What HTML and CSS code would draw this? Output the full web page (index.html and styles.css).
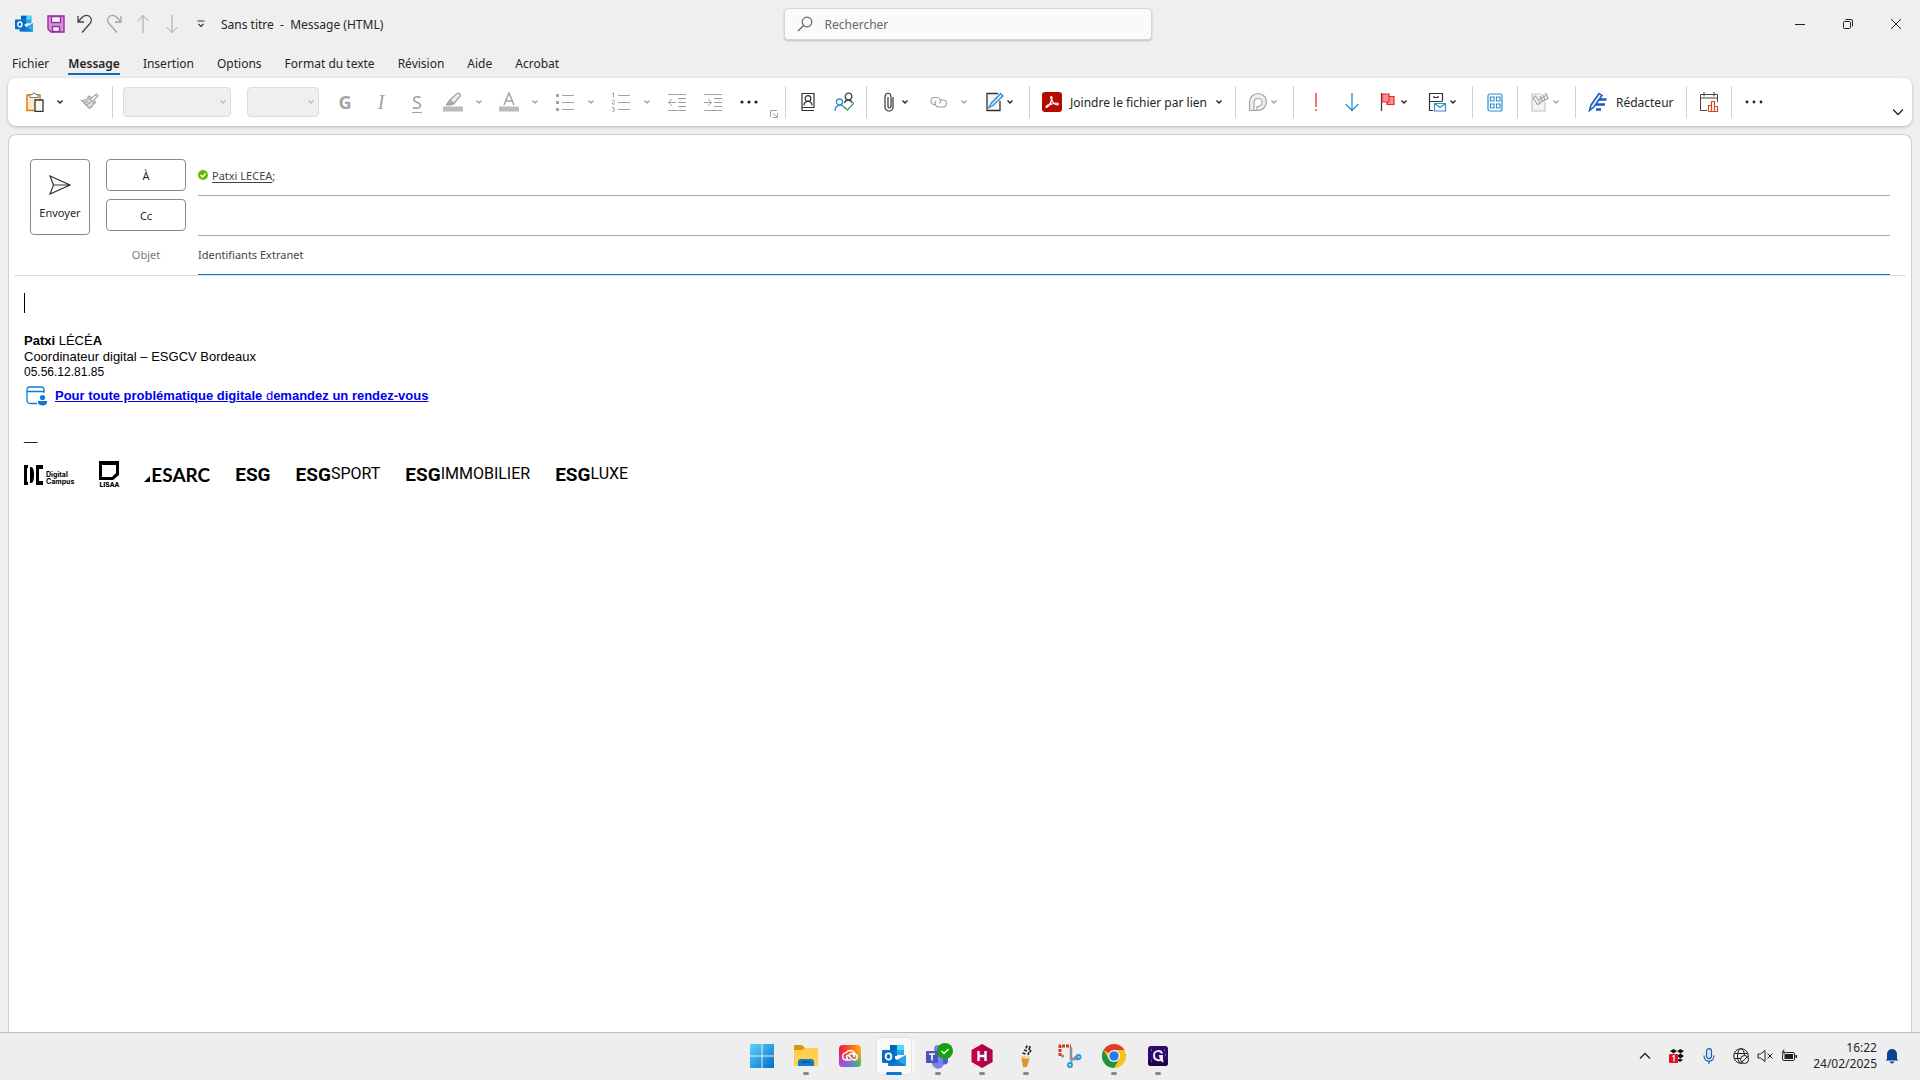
FILE: index.html
```html
<!DOCTYPE html>
<html lang="fr">

<head>
	<meta charset="UTF-8">
	<meta name="viewport" content="width=device-width, initial-scale=1.0">
	<title>Sans titre - Message (HTML)</title>
	<link rel="stylesheet" href="styles.css">
</head>

<body>
	<svg class="sprite" aria-hidden="true">
		<symbol id="chevron" viewBox="0 0 8 8"><path d="M1.5 2.5L4 5l2.500-2.500" fill="none" stroke="currentColor" stroke-width="1.400"/></symbol>
		<symbol id="outlook" viewBox="0 0 24 24">
			<path d="M8 1h14v10H8z" fill="#28a8ea"/>
			<path d="M15 1h7v5h-7z" fill="#50d9ff"/>
			<path d="M8 1h7v5H8z" fill="#0364b8"/>
			<path d="M8 6h7v6H8z" fill="#0078d4"/>
			<path d="M6 11l9 5 9-5v11H6z" fill="#1490df"/>
			<path d="M24 11v11H10z" fill="#28a8ea"/>
			<path d="M6 10l18 12H7z" fill="#0f5fae" opacity=".6"/>
			<rect y="6" width="13" height="13" rx="1" fill="#0a6cc8"/>
			<ellipse cx="6.500" cy="12.500" rx="2.800" ry="3.200" fill="none" stroke="#fff" stroke-width="1.800"/>
		</symbol>
	</svg>

	<header class="titlebar">
		<div class="quick-access">
			<svg class="app-icon" width="18" height="18"><use href="#outlook"/></svg>
			<button aria-label="Enregistrer"><svg width="18" height="18" viewBox="0 0 18 18" fill="#d594dc" stroke="#9331a0" stroke-width="1.400"><path d="M1 1h16v16H4l-3-3z"/><path d="M4.500 1.500h9v6h-9zM5.500 11.500h7v5h-7z" fill="#fafafa"/></svg></button>
			<button aria-label="Annuler"><svg width="18" height="20" viewBox="0 0 18 20" fill="none" stroke="#444" stroke-width="1.300"><path d="M2 2v6h6M2 8l4-4.500c3-3 7-2.500 8.500 0 1.500 2.300.700 4.500-.500 6L6 18.500"/></svg></button>
			<button class="off" aria-label="Rétablir"><svg width="18" height="20" viewBox="0 0 18 20" fill="none" stroke="currentColor" stroke-width="1.300"><path d="M16 2v6h-6M16 8l-4-4.500c-3-3-7-2.500-8.500 0-1.500 2.300-.700 4.500.500 6l8 9"/></svg></button>
			<button class="off" aria-label="Élément précédent"><svg width="14" height="20" viewBox="0 0 14 20" fill="none" stroke="currentColor"><path d="M7 19V1.500M1.500 7L7 1.500 12.500 7"/></svg></button>
			<button class="off" aria-label="Élément suivant"><svg width="14" height="20" viewBox="0 0 14 20" fill="none" stroke="currentColor"><path d="M7 1v17.500M1.500 13L7 18.500l5.500-5.500"/></svg></button>
			<button aria-label="Personnaliser"><svg width="8" height="8" viewBox="0 0 8 8" fill="none" stroke="#333" stroke-width="1.200"><path d="M.500 1h7M1.500 4L4 6.500 6.500 4"/></svg></button>
			<h1>Sans titre&nbsp; -&nbsp; Message (HTML)</h1>
		</div>
		<label class="search">
			<svg width="16" height="16" viewBox="0 0 16 16" fill="none" stroke="#666" stroke-width="1.200"><circle cx="10" cy="6" r="4.800"/><path d="M6.500 9.500L1 15"/></svg>
			<input type="search" placeholder="Rechercher" aria-label="Rechercher">
		</label>
		<div class="window-buttons">
			<button aria-label="Réduire"><svg width="12" height="12" viewBox="0 0 12 12" stroke="#222"><path d="M1 6.500h10"/></svg></button>
			<button aria-label="Restaurer"><svg width="12" height="12" viewBox="0 0 12 12" fill="none" stroke="#222"><rect x="1.500" y="3.500" width="7" height="7" rx="1"/><path d="M3.500 1.500H9A1.500 1.500 0 0 1 10.500 3v5.500"/></svg></button>
			<button aria-label="Fermer"><svg width="12" height="12" viewBox="0 0 12 12" stroke="#222"><path d="M1 1l10 10M11 1L1 11"/></svg></button>
		</div>
	</header>

	<nav class="tabs">
		<a href="#">Fichier</a>
		<a href="#" class="active">Message</a>
		<a href="#">Insertion</a>
		<a href="#">Options</a>
		<a href="#">Format du texte</a>
		<a href="#">Révision</a>
		<a href="#">Aide</a>
		<a href="#">Acrobat</a>
	</nav>

	<section class="ribbon">
		<div class="group">
			<button class="tool" aria-label="Coller"><svg width="20" height="20" viewBox="0 0 20 20" fill="none"><path d="M3 4h12v15H3z" fill="#fde8c8"/><path d="M6 3H3v15.500h7M13 3h3v4" stroke="#e07a10" stroke-width="1.500"/><path d="M6 5.500v-3h2.500a1.500 1.500 0 0 1 3 0H14v3z" fill="#fff" stroke="#777"/><path d="M11 8h8v11.500h-8z" fill="#fafafa" stroke="#333" stroke-width="1.300"/></svg></button>
			<button class="drop" aria-label="Options de collage"><svg width="8" height="8"><use href="#chevron"/></svg></button>
			<button class="tool off" aria-label="Reproduire la mise en forme"><svg width="20" height="20" viewBox="0 0 20 20" fill="#ddd" stroke="currentColor" stroke-width="1.200"><path d="M1.500 8.500c2.500.500 5-.500 7-3l5.500 5.500c-1 2.500-2.500 4.500-4.500 5.500z"/><path d="M8 5l6.500 6.500 1.200-1.200-2-2 4.300-4.500-1.700-1.700-4.600 4.100-2.300-2.200z" fill="#fff"/><path d="M4 11l4-2M6 13l5-3" fill="none"/></svg></button>
		</div>
		<div class="group fonts">
			<span class="combo font-name"><select aria-label="Police" disabled></select><svg width="8" height="8"><use href="#chevron"/></svg></span>
			<span class="combo"><select aria-label="Taille" disabled></select><svg width="8" height="8"><use href="#chevron"/></svg></span>
			<button class="tool off letter bold">G</button>
			<button class="tool off letter italic">I</button>
			<button class="tool off letter underline">S</button>
			<button class="tool off" aria-label="Surlignage"><svg width="20" height="20" viewBox="0 0 20 20" fill="none" stroke="currentColor"><path d="M0 17h20" stroke="#bbb" stroke-width="5"/><path d="M7 8l7-6.500c2-1 4 1 3 2.500L11 11.500z" fill="#eee" stroke-width="1.300"/><path d="M6.500 8l4.500 4-3 1H3z" fill="#aaa"/></svg></button>
			<button class="drop off" aria-label="Couleurs de surlignage"><svg width="8" height="8"><use href="#chevron"/></svg></button>
			<button class="tool off" aria-label="Couleur de police"><svg width="20" height="20" viewBox="0 0 20 20" fill="none" stroke="currentColor"><path d="M0 17h20" stroke="#bbb" stroke-width="5"/><path d="M5 13l5-12 5 12M6.500 9h7" stroke-width="1.500"/></svg></button>
			<button class="drop off" aria-label="Couleurs de police"><svg width="8" height="8"><use href="#chevron"/></svg></button>
			<button class="tool off" aria-label="Puces"><svg width="20" height="20" viewBox="0 0 20 20" stroke="currentColor"><path d="M7 3.500h12M7 10.500h12M7 17.500h12"/><path d="M1 3.500h3M1 10.500h3M1 17.500h3" stroke-width="3"/></svg></button>
			<button class="drop off" aria-label="Styles de puces"><svg width="8" height="8"><use href="#chevron"/></svg></button>
			<button class="tool off" aria-label="Numérotation"><svg width="20" height="20" viewBox="0 0 20 20" stroke="currentColor" fill="none"><path d="M7 3.500h12M7 10.500h12M7 17.500h12"/><path d="M1 2l1.500-1v4.500M1 8.500c1-1 2.500-.500 2.500.500S1.500 10.500 1 12h3M1 15.500c2.500-1 3 1.500 1 1.500 2.500 0 2 3-1 2"/></svg></button>
			<button class="drop off" aria-label="Formats de numéros"><svg width="8" height="8"><use href="#chevron"/></svg></button>
			<button class="tool off" aria-label="Diminuer le retrait"><svg width="20" height="20" viewBox="0 0 20 20" stroke="currentColor" fill="none"><path d="M1 2.500h18M11 6.500h8M11 10.500h8M11 14.500h8M1 18.500h18M9 10.500H1.500M5 7l-3.500 3.500L5 14"/></svg></button>
			<button class="tool off" aria-label="Augmenter le retrait"><svg width="20" height="20" viewBox="0 0 20 20" stroke="currentColor" fill="none"><path d="M1 2.500h18M11 6.500h8M11 10.500h8M11 14.500h8M1 18.500h18M1 10.500h7.500M5 7l3.500 3.500L5 14"/></svg></button>
			<button class="tool" aria-label="Plus de mise en forme"><svg width="20" height="20" viewBox="0 0 20 20" fill="#222"><circle cx="3" cy="10" r="1.600"/><circle cx="10" cy="10" r="1.600"/><circle cx="17" cy="10" r="1.600"/></svg></button>
			<button class="launcher off" aria-label="Police et paragraphe"><svg width="8" height="8" viewBox="0 0 8 8" fill="none" stroke="currentColor"><path d="M.500 7V.500H7M3 3l4 4M7.500 3v4.500H3"/></svg></button>
		</div>
		<div class="group">
			<button class="tool" aria-label="Carnet d'adresses"><svg width="20" height="20" viewBox="0 0 20 20" fill="none" stroke="#333" stroke-width="1.200"><path d="M16 15.500V1.500H4v17h12M4 15.500h12.500"/><circle cx="10" cy="6.500" r="2.800"/><path d="M6 13.500c0-5.500 8-5.500 8 0"/></svg></button>
			<button class="tool" aria-label="Vérifier les noms"><svg width="20" height="20" viewBox="0 0 20 20" fill="none" stroke-width="1.300"><g stroke="#2b8fd0"><circle cx="5.500" cy="10" r="3"/><path d="M1 19c0-7 8-7.500 9.500-2.500"/></g><g stroke="#444"><circle cx="14.500" cy="4.500" r="3.300"/><path d="M10.500 11c1-4 6-4 8 0"/></g><path d="M10.500 15l3 3 6.500-7" stroke="#3aa655"/></svg></button>
		</div>
		<div class="group">
			<button class="menu" aria-label="Joindre un fichier"><svg width="20" height="20" viewBox="0 0 20 20" fill="none" stroke="#333" stroke-width="1.200"><path d="M14 5v10a4 4 0 0 1-8 0V5c0-5 6-5 6 0v9.500a1.500 1.500 0 0 1-3 0V5"/></svg><svg width="8" height="8"><use href="#chevron"/></svg></button>
			<button class="tool off" aria-label="Lien"><svg width="20" height="20" viewBox="0 0 20 20" fill="none" stroke="currentColor" stroke-width="1.200"><path d="M8 12.500H5a4 4 0 0 1 0-7h4a3.500 3.500 0 0 1 2.500 6M12 8h3a3.500 3.500 0 0 1 0 7h-4.500a3.500 3.500 0 0 1-2.500-6"/></svg></button>
			<button class="drop off" aria-label="Options de lien"><svg width="8" height="8"><use href="#chevron"/></svg></button>
			<button class="menu" aria-label="Signature"><svg width="20" height="20" viewBox="0 0 20 20" fill="none"><path d="M16 9v9.500H3v-17h11" fill="#f7f7f7" stroke="#333" stroke-width="1.300"/><path d="M7 11.500L16.500 1.500l2.500 2.500L9 13.500l-4 2z" fill="#d6ebfa" stroke="#2b8fd0" stroke-width="1.300"/></svg><svg width="8" height="8"><use href="#chevron"/></svg></button>
		</div>
		<div class="group">
			<button class="text-tool"><svg width="20" height="20" viewBox="0 0 20 20"><rect width="20" height="20" rx="3" fill="#b30b00"/><path d="M4 15c1 1 3-1.500 4.500-4.500S10.500 5 9.500 4.500s-1 2 1 5 4.500 4 5.500 3-1-2-4.500-1S4.500 13 4 15z" fill="none" stroke="#fff" stroke-width="1.300"/></svg>Joindre le fichier par lien<svg width="8" height="8"><use href="#chevron"/></svg></button>
		</div>
		<div class="group">
			<button class="menu off" aria-label="Boucle"><svg width="20" height="20" viewBox="0 0 20 20" fill="#eee" stroke="currentColor" stroke-width="1.200"><path d="M1.500 18.500V10a8.500 8.500 0 1 1 8.500 8.500z"/><path d="M6 18v-7.500a4 4 0 1 1 4 4H9V18" fill="#fff"/></svg><svg width="8" height="8"><use href="#chevron"/></svg></button>
		</div>
		<div class="group">
			<button class="tool" aria-label="Importance haute"><svg width="20" height="20" viewBox="0 0 20 20" stroke="#f04848" stroke-width="1.500"><path d="M10 1v14M10 17v2"/></svg></button>
			<button class="tool" aria-label="Importance faible"><svg width="20" height="20" viewBox="0 0 20 20" fill="none" stroke="#2b8fd0" stroke-width="1.300"><path d="M10 1v17.500M3.500 12l6.500 6.500 6.500-6.500"/></svg></button>
			<button class="menu" aria-label="Assurer un suivi"><svg width="20" height="20" viewBox="0 0 20 20"><path d="M3.500 1v18" stroke="#333" stroke-width="1.200"/><path d="M4 2h7v2.500h5v8h-7V10H4z" fill="#ff8c90" stroke="#d92c2c" stroke-width="1.200"/><path d="M11 4.500V10H9" fill="none" stroke="#d92c2c"/></svg><svg width="8" height="8"><use href="#chevron"/></svg></button>
			<button class="menu" aria-label="Enregistrer dans"><svg width="20" height="20" viewBox="0 0 20 20" fill="none" stroke-width="1.200"><path d="M6 18.500H2.500v-17h13V9M2.500 9.500h13M7 4v1.500h4V4" stroke="#333"/><path d="M7.500 11.500h11v7.500h-11zl5.500 4 5.500-4" fill="#fff" stroke="#2b8fd0"/></svg><svg width="8" height="8"><use href="#chevron"/></svg></button>
		</div>
		<div class="group">
			<button class="tool" aria-label="Applications"><svg width="20" height="20" viewBox="0 0 20 20" fill="none" stroke="#2b8fd0" stroke-width="1.200"><rect x="3" y="2" width="14" height="17" rx="2"/><path d="M5.500 5H9v4H5.500zM11.500 5H15v4h-3.500zM5.500 12H9v4H5.500zM11.500 12H15v4h-3.500z"/></svg></button>
		</div>
		<div class="group">
			<button class="menu off" aria-label="Modèles"><svg width="20" height="20" viewBox="0 0 20 20" fill="#f3f3f3" stroke="#c4c4c4" stroke-width="1.200"><path d="M15 10v9H2V2h9"/><path d="M3 6l4.500 6.500 3-1.500L5.500 4z" stroke="currentColor"/><path d="M10 4l3 6M12.500 2.500l3 6M15 1l3 5M9.500 7.500l8-5M11 10l8-4" stroke="currentColor"/></svg><svg width="8" height="8"><use href="#chevron"/></svg></button>
		</div>
		<div class="group">
			<button class="text-tool"><svg width="20" height="20" viewBox="0 0 20 20" fill="none" stroke="#185abd"><path d="M9 7.500h9.500M6 12.500h11M8 17.500h5" stroke-width="2.600"/><path d="M3 13L11 1.500l3 2L6 15l-4.500 3.500z" fill="#d6e4f7" stroke-width="1.500"/></svg>Rédacteur</button>
		</div>
		<div class="group">
			<button class="tool" aria-label="Calendrier"><svg width="20" height="20" viewBox="0 0 20 20" fill="none"><path d="M8 18.500H1.500v-16h17V10M1.500 6h17M5 0v4.500M15 0v4.500" stroke="#444"/><path d="M9.500 19.500v-6h3v6h-3m3 0V9.500h3v10h-3m3 0v-5h3v5z" fill="#fff" stroke="#d9481c" stroke-width="1.200"/></svg></button>
		</div>
		<div class="group">
			<button class="tool" aria-label="Autres commandes"><svg width="20" height="20" viewBox="0 0 20 20" fill="#222"><circle cx="3" cy="10" r="1.400"/><circle cx="10" cy="10" r="1.400"/><circle cx="17" cy="10" r="1.400"/></svg></button>
		</div>
		<button class="collapse" aria-label="Options du ruban"><svg width="12" height="12" viewBox="0 0 12 12" fill="none" stroke="#222" stroke-width="1.300"><path d="M1 3.500l5 5 5-5"/></svg></button>
	</section>

	<main class="compose">
		<form class="headers">
			<button type="button" class="send"><svg width="22" height="20" viewBox="0 0 22 20" fill="none" stroke="#333" stroke-width="1.200"><path d="M1 1l20 9L1 19l3.500-9zM4.500 10H21"/></svg>Envoyer</button>
			<div class="fields">
				<button type="button" class="field-button">À</button>
				<div class="field">
					<svg width="10" height="10" viewBox="0 0 10 10"><circle cx="5" cy="5" r="5" fill="#6bb700"/><path d="M2.500 5l2 2 3.200-3.500" fill="none" stroke="#fff" stroke-width="1.400"/></svg>
					<span><a href="#">Patxi LECEA</a>;</span>
				</div>
				<button type="button" class="field-button">Cc</button>
				<div class="field"><input type="text" aria-label="Cc"></div>
				<label for="subject">Objet</label>
				<div class="field subject"><input type="text" id="subject" value="Identifiants Extranet"></div>
			</div>
		</form>

		<article class="message">
			<div class="caret"></div>
			<div class="signature">
				<p><b>Patxi</b> LÉCÉ<b>A</b></p>
				<p>Coordinateur digital – ESGCV Bordeaux</p>
				<p class="phone">05.56.12.81.85</p>
				<p class="booking">
					<svg width="21" height="20" viewBox="0 0 21 20" fill="none" stroke="#0f78d4"><path d="M11 17.500H4A3 3 0 0 1 1 14.500V3.500A2.500 2.500 0 0 1 3.500 1h12A2.500 2.500 0 0 1 18 3.500V7M1 5.500h17" stroke-width="1.300"/><circle cx="16.500" cy="11.500" r="2.600" fill="#0f78d4" stroke="none"/><path d="M12 15h9v1.500c0 4-9 4-9 0z" fill="#0f78d4" stroke="none"/></svg>
					<a href="#">Pour toute problématique digitale <span>d</span>emandez un rendez-vous</a>
				</p>
				<p class="dash">__</p>
			</div>
			<div class="logos">
				<div class="logo digital"><svg width="19" height="20" viewBox="0 0 19 20"><path d="M0 0h4v3H3v14h1v3H0zM6 2h1c2 0 3 3 3 8s-1 8-3 8H6zM12 0h7v4h-4v12h4v4h-7z"/></svg><span>Digital<br>Campus</span></div>
				<div class="logo lisaa"><svg width="20" height="20" viewBox="0 0 20 20"><path d="M0 0h20v14l-6 5H0zM3 4v12h10l4-4V4z" fill-rule="evenodd"/></svg><span>LISAA</span></div>
				<div class="logo esarc"><svg width="6" height="6" viewBox="0 0 6 6"><path d="M0 6l6-6v6z"/></svg>ESARC</div>
				<div class="logo">ESG</div>
				<div class="logo">ESG<span>SPORT</span></div>
				<div class="logo">ESG<span>IMMOBILIER</span></div>
				<div class="logo">ESG<span>LUXE</span></div>
			</div>
		</article>
	</main>

	<footer class="taskbar">
		<div class="apps">
			<button aria-label="Démarrer"><svg width="24" height="24" viewBox="0 0 24 24"><defs><linearGradient id="win" x2="1" y2="1"><stop stop-color="#5fd0ff"/><stop offset="1" stop-color="#0070c8"/></linearGradient></defs><path d="M0 0h11.500v11.500H0zM12.500 0H24v11.500H12.500zM0 12.500h11.500V24H0zM12.500 12.500H24V24H12.500z" fill="url(#win)"/></svg></button>
			<button class="running" aria-label="Explorateur"><svg width="24" height="24" viewBox="0 0 24 24"><path d="M0 2a1 1 0 0 1 1-1h7l3 3h12a1 1 0 0 1 1 1v5H0z" fill="#d9960a"/><path d="M0 6h8l3-2h12a1 1 0 0 1 1 1v17H0z" fill="#ffd04d"/><path d="M4 22v-4a3 3 0 0 1 3-3h10a3 3 0 0 1 3 3v4z" fill="#1278c8"/><path d="M8 18h8" stroke="#0a4f90" stroke-width="1.500"/></svg></button>
			<button aria-label="Creative Cloud"><svg width="22" height="22" viewBox="0 0 22 22"><defs><linearGradient id="cc" x2="1" y2="0"><stop stop-color="#f0144a"/><stop offset=".5" stop-color="#ff5a1a"/><stop offset="1" stop-color="#ffb01a"/></linearGradient><linearGradient id="cc2" x2="1" y2="0"><stop stop-color="#a94cff"/><stop offset=".5" stop-color="#4a7bff"/><stop offset="1" stop-color="#22c36b"/></linearGradient><linearGradient id="fade" x2="0" y2="1"><stop offset=".3" stop-color="#000"/><stop offset="1" stop-color="#fff"/></linearGradient><mask id="lower"><rect width="22" height="22" fill="url(#fade)"/></mask></defs><rect width="22" height="22" rx="4" fill="url(#cc)"/><rect width="22" height="22" rx="4" fill="url(#cc2)" mask="url(#lower)"/><path d="M12 15H7.500a3.600 3.600 0 0 1-.500-7.200A5 5 0 0 1 16 9c3.500 1.500 2.500 6-1 6-3 0-3.500-4.500-6-4.500a1.500 1.500 0 0 0 0 3M10 10c2-3 6-1 5 2" fill="none" stroke="#fff" stroke-width="1.500"/></svg></button>
			<button class="running current" aria-label="Outlook"><svg width="24" height="24"><use href="#outlook"/></svg></button>
			<button class="running" aria-label="Teams"><svg width="30" height="26" viewBox="0 0 30 26"><circle cx="15" cy="6" r="4" fill="#7b83eb"/><path d="M9 9h12v9a6 6 0 0 1-12 3z" fill="#7b83eb"/><path d="M20 10h5v8c0 3-3 4-5 3z" fill="#5059c9"/><rect x="3" y="8" width="12" height="12" rx="1" fill="#4b53bc"/><path d="M6 11h6M9 11v6.500" stroke="#fff" stroke-width="1.600"/><circle cx="22" cy="8" r="8" fill="#13a10e"/><path d="M18.500 8l2.500 2.500 4.500-4.500" fill="none" stroke="#fff" stroke-width="1.500"/></svg></button>
			<button class="running" aria-label="H"><svg width="22" height="24" viewBox="0 0 22 24"><path d="M11 0l10.500 6v12L11 24 .500 18V6z" fill="#c20045"/><path d="M11 0l10.500 6v12L11 24z" fill="#8e0e52" opacity=".5"/><path d="M7.500 7v10M14.500 7v10M8 12h6" stroke="#fff" stroke-width="2.400"/></svg></button>
			<button class="running" aria-label="Glace"><svg width="14" height="24" viewBox="0 0 14 24"><path d="M3 12C1 8 5 1 10 .500c4 0 3 7 .500 12z" fill="#eee"/><path d="M8 1.500l-1 3M11 2l-1 4M5 6l3 1M3.500 9l3 1M10 8l-1 3M12 6l-1 2" stroke="#222" stroke-width="1.700"/><path d="M2 12l9 1-3 10H4z" fill="#df962b"/><path d="M2 12l9 1-1 2-8-1z" fill="#f5d9a4"/></svg></button>
			<button aria-label="Capture"><svg width="24" height="24" viewBox="0 0 24 24" fill="none"><path d="M2 12V2h11" stroke="#d23b12" stroke-width="3" stroke-dasharray="3 1"/><path d="M13 3v12h8M3 12h3" stroke="#8b9298" stroke-width="2.500"/><path d="M14 15l-1 4M16 14l4-2" stroke="#8b9298" stroke-width="2"/><circle cx="12" cy="21" r="2" stroke="#1a9be0" stroke-width="1.800"/><circle cx="20.500" cy="13" r="2" stroke="#1a9be0" stroke-width="1.800"/></svg></button>
			<button class="running" aria-label="Chrome"><svg width="24" height="24" viewBox="0 0 24 24"><circle cx="12" cy="12" r="12" fill="#fbc116"/><path d="M12 12L1.600 6A12 12 0 0 1 22.400 6H12z" fill="#e33b2e"/><path d="M1.600 6A12 12 0 0 0 12 24l5.200-9L12 12 6.800 15z" fill="#229342"/><circle cx="12" cy="12" r="6" fill="#fff"/><circle cx="12" cy="12" r="4.800" fill="#2a7de9"/></svg></button>
			<button class="running" aria-label="Q"><svg width="20" height="20" viewBox="0 0 20 20"><rect width="20" height="20" rx="3" fill="#2f0a6b"/><path d="M0 14h20v3a3 3 0 0 1-3 3H3a3 3 0 0 1-3-3z" fill="#1c0447"/><path d="M14 7.500C13 4 6 4 6 9.500s6 5.500 8 3.500v-3h-3M12 11l3 5" fill="none" stroke="#f1e6ff" stroke-width="2"/><path d="M3 4h1M16 4h1M3 15h1M17 9h1" stroke="#c9a6ff"/></svg></button>
		</div>
		<div class="tray">
			<button aria-label="Icônes masquées"><svg width="12" height="12" viewBox="0 0 12 12" fill="none" stroke="#222" stroke-width="1.300"><path d="M1 8.500l5-5 5 5"/></svg></button>
			<button aria-label="Dropbox"><svg width="16" height="16" viewBox="0 0 16 16"><path d="M1 3l3.500-2L8 3 4.500 5.500zM8 3l3.500-2L15 3l-3.500 2.500zM8 8l3.500-2.500L15 8l-3.500 2.500zM8 12l3-1.500 3 1.500-3 2z" fill="#111"/><rect y="6" width="9" height="9" rx="1" fill="#e0102a"/><path d="M3.500 8.500l1.500-1v6" fill="none" stroke="#fff" stroke-width="1.200"/></svg></button>
			<button aria-label="Micro"><svg width="16" height="16" viewBox="0 0 16 16" fill="none" stroke="#1f5fb4" stroke-width="1.200"><rect x="5.500" y=".600" width="5" height="10" rx="2.500" fill="#d4e6fa"/><path d="M3 7.500c0 7.500 10 7.500 10 0M8 13v3"/></svg></button>
			<button class="status" aria-label="Réseau, son et batterie">
				<svg width="16" height="16" viewBox="0 0 16 16" fill="none" stroke="#222"><circle cx="8" cy="8" r="7.300"/><ellipse cx="8" cy="8" rx="3.500" ry="7.300"/><path d="M1.500 5.500h13M1.500 10.500h8"/><circle cx="11.500" cy="11.500" r="4" fill="#eee"/><path d="M9 14l5-5"/></svg>
				<svg width="16" height="16" viewBox="0 0 16 16" fill="none" stroke="#222"><path d="M1 6h2.500L8 2.500v11L3.500 10H1zM10.500 5.500l5 5M15.500 5.500l-5 5"/></svg>
				<svg width="16" height="16" viewBox="0 0 16 16"><rect x="1.500" y="4.500" width="12" height="8" rx="1.500" fill="none" stroke="#222"/><path d="M3.500 6h8.500v5H3.500zM14.500 7H16v3h-1.500z" fill="#222"/><path d="M3.500 0L0 5h2.500l-.500 3L5.500 3.500H3z" fill="#222" stroke="#eee" stroke-width=".500"/></svg>
			</button>
			<button class="clock"><time>16:22</time><time>24/02/2025</time></button>
			<button class="bell" aria-label="Notifications"><svg width="14" height="16" viewBox="0 0 14 16" fill="#0a4394"><path d="M2 11V6a5 5 0 0 1 10 0v5l1.500 1.500H.500zM4.500 13.500h5c-1 2.500-4 2.500-5 0z"/></svg></button>
		</div>
	</footer>
</body>

</html>
```
FILE: styles.css
```css
* {
	box-sizing: border-box;
}

body {
	margin: 0;
	min-height: 100vh;
	display: flex;
	flex-direction: column;
	background-color: #efefef;
	color: #262626;
	font-family: "Noto Sans", "Open Sans", sans-serif;
	font-size: 12px;
	overflow: hidden;
}

button {
	display: flex;
	align-items: center;
	justify-content: center;
	padding: 0;
	border: none;
	background: none;
	color: inherit;
	font: inherit;
	cursor: pointer;
}

input {
	width: 100%;
	padding: 0;
	border: none;
	outline: none;
	background: none;
	color: inherit;
	font: inherit;
}

a {
	color: inherit;
	text-decoration: none;
}

svg {
	display: block;
	flex-shrink: 0;
}

.sprite {
	position: absolute;
	width: 0;
	height: 0;
}

.off {
	color: #a3a3a3;
}

/* title bar */
.titlebar {
	display: grid;
	grid-template-columns: 1fr 368px 1fr;
	align-items: center;
	height: 48px;
	padding-left: 15px;
}

.quick-access {
	display: flex;
	align-items: center;
}

.quick-access button {
	width: 29px;
	height: 28px;
}

.app-icon {
	margin-right: 8px;
}

.quick-access h1 {
	margin: 0 0 0 6px;
	font-size: 12px;
	font-weight: 400;
}

.search {
	display: flex;
	align-items: center;
	gap: 12px;
	height: 32px;
	padding: 0 12px;
	border: 1px solid #d6d6d6;
	border-radius: 4px;
	background-color: #fafafa;
	box-shadow: 0 1px 2px rgba(0, 0, 0, 0.2);
}

.search input::placeholder {
	color: #666;
	opacity: 1;
}

.window-buttons {
	display: flex;
	justify-content: flex-end;
	height: 100%;
}

.window-buttons button {
	width: 48px;
}

/* tabs */
.tabs {
	display: flex;
	gap: 23px;
	height: 30px;
	padding: 4px 12px 0;
}

.tabs a {
	height: 23px;
	line-height: 23px;
}

.tabs a:first-child {
	margin-right: -4px;
}

.tabs .active {
	border-bottom: 2px solid #0f6cbd;
	font-weight: 600;
}

/* ribbon */
.ribbon {
	display: flex;
	align-items: center;
	height: 48px;
	margin: 0 8px;
	padding-left: 4px;
	border-radius: 8px;
	background-color: #fff;
	box-shadow: 0 1px 3px rgba(0, 0, 0, 0.25);
}

.group {
	display: flex;
	align-items: center;
	height: 32px;
	padding: 0 4px;
	border-right: 1px solid #d0d0d0;
}

.group:nth-child(12) {
	border-right: none;
}

.fonts {
	padding-left: 10px;
}

.tool {
	width: 36px;
	height: 32px;
}

.drop {
	width: 16px;
	height: 32px;
	margin-right: 4px;
}

.menu {
	gap: 2px;
	height: 32px;
	padding: 0 11px 0 8px;
}

.text-tool {
	gap: 8px;
	height: 32px;
	padding: 0 8px;
}

.combo {
	position: relative;
	width: 72px;
	margin-right: 8px;
	color: #bbb;
}

.font-name {
	width: 108px;
	margin-right: 16px;
}

.combo select {
	display: block;
	width: 100%;
	height: 30px;
	appearance: none;
	border: 1px solid #dcdcdc;
	border-radius: 4px;
	background-color: #efefef;
	opacity: 1;
}

.combo svg {
	position: absolute;
	top: 11px;
	right: 4px;
}

.letter {
	font-size: 18px;
}

.bold {
	font-weight: 700;
}

.italic {
	font-family: "Liberation Serif", serif;
	font-size: 20px;
	font-style: italic;
}

.underline {
	text-decoration: underline;
	text-underline-offset: 3px;
}

.launcher {
	align-self: flex-end;
	width: 14px;
	height: 8px;
}

.collapse {
	align-self: flex-end;
	width: 28px;
	height: 28px;
	margin-left: auto;
}

/* message window */
.compose {
	flex: 1;
	margin: 8px 8px 0;
	padding: 0 5px;
	border: 1px solid #cfcfcf;
	border-bottom: none;
	border-radius: 8px 8px 0 0;
	background-color: #fff;
	font-size: 11px;
}

.headers {
	display: flex;
	align-items: flex-start;
	gap: 16px;
	padding: 24px 16px 0;
	border-bottom: 1px solid #ddd;
}

.send {
	flex-direction: column;
	gap: 10px;
	width: 60px;
	height: 76px;
	border: 1px solid #8a8a8a;
	border-radius: 4px;
}

.fields {
	flex: 1;
	display: grid;
	grid-template-columns: 80px 1fr;
	grid-auto-rows: 40px;
	column-gap: 12px;
	margin-bottom: -4px;
}

.field-button {
	height: 32px;
	border: 1px solid #8a8a8a;
	border-radius: 4px;
}

.fields label {
	color: #777;
	line-height: 32px;
	text-align: center;
}

.field {
	display: flex;
	align-items: center;
	gap: 4px;
	height: 37px;
	padding-bottom: 4px;
	border-bottom: 1px solid #aaa;
	color: #444;
}

.field a {
	text-decoration: underline;
	text-underline-offset: 2px;
}

.subject {
	height: 36px;
	border-color: #0f78d4;
}

.message {
	padding: 17px 10px;
	color: #000;
	font-family: "Liberation Sans", Arial, sans-serif;
	font-size: 13px;
}

.caret {
	width: 1px;
	height: 20px;
	background-color: #000;
}

.signature {
	margin-top: 20px;
}

.signature p {
	margin: 0;
	line-height: 16px;
}

.signature .phone {
	font-size: 12px;
	line-height: 15px;
}

.signature .booking {
	display: flex;
	align-items: center;
	gap: 8px;
	padding-left: 2px;
	line-height: 32px;
}

.booking a {
	color: #0000ee;
	font-weight: 700;
	text-decoration: underline;
}

.booking span {
	font-weight: 400;
}

.signature .dash {
	margin-top: 16px;
	font-size: 12px;
}

.logos {
	display: flex;
	align-items: center;
	gap: 25px;
	height: 28px;
	margin-top: 17px;
}

.logo {
	display: flex;
	align-items: flex-start;
	font-family: Roboto, sans-serif;
	font-size: 19px;
	font-weight: 700;
	line-height: 20px;
}

.logo span {
	font-size: 16px;
	font-weight: 400;
	line-height: 18px;
}

.logo.digital {
	gap: 3px;
}

.digital span {
	padding-top: 6px;
	font-family: Inter, sans-serif;
	font-size: 7px;
	font-weight: 700;
	line-height: 7px;
}

.logo.lisaa {
	flex-direction: column;
	align-items: center;
	gap: 1px;
}

.lisaa span {
	font-size: 7px;
	font-weight: 900;
	line-height: 7px;
}

.logo.esarc {
	align-items: flex-end;
	gap: 1px;
	font-family: Lato, sans-serif;
}

.esarc svg {
	margin-bottom: 3px;
}

/* taskbar */
.taskbar {
	display: grid;
	grid-template-columns: 1fr auto 1fr;
	align-items: center;
	height: 48px;
	padding-bottom: 1px;
	border-top: 1px solid #bdbdbd;
	background-color: #eee;
}

.apps {
	grid-column: 2;
	display: flex;
}

.apps button {
	position: relative;
	width: 44px;
	height: 38px;
}

.running::after {
	content: "";
	position: absolute;
	bottom: 0;
	left: 19px;
	width: 6px;
	height: 3px;
	border-radius: 2px;
	background-color: #868686;
}

.current::before {
	content: "";
	position: absolute;
	z-index: -1;
	inset: 0 4px;
	border: 1px solid #e2e2e2;
	border-radius: 4px;
	background-color: #f9f9f9;
	box-shadow: 4px 0 0 -1px #f6f6f6;
}

.apps .current {
	z-index: 0;
}

.current::after {
	left: 14px;
	width: 16px;
	background-color: #0f78d4;
}

.tray {
	display: flex;
	align-items: center;
	justify-content: flex-end;
	padding-right: 13px;
}

.tray button {
	width: 32px;
	height: 40px;
}

.tray .status {
	gap: 8px;
	width: 80px;
}

.tray .clock {
	flex-direction: column;
	align-items: flex-end;
	width: 72px;
	line-height: 16px;
}

.tray .bell {
	width: 30px;
}
```
